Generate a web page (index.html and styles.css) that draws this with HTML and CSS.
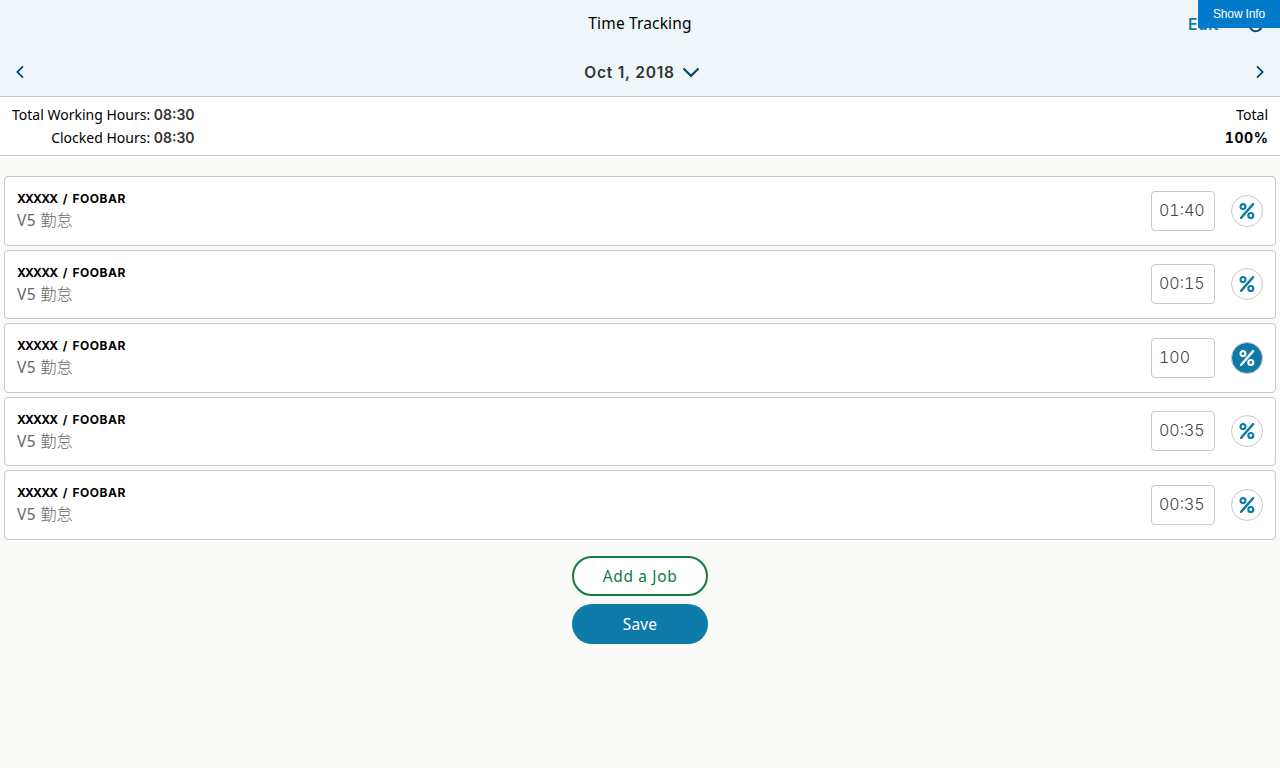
FILE: index.html
```html
<!DOCTYPE html>
<html lang="en">
<head>
<meta charset="utf-8">
<title>Time Tracking</title>
<link rel="stylesheet" href="styles.css">
</head>
<body>
<svg width="0" height="0" class="sprite">
  <symbol id="percent" viewBox="0 0 16 16"><g fill="none" stroke="currentColor" stroke-width="2.1"><circle cx="4" cy="3.6" r="2.5"/><circle cx="11.8" cy="12.5" r="2.5"/><path d="M14 1.2 2.2 14.8" stroke-width="2.5" stroke-linecap="round"/></g></symbol>
</svg>
<header class="header">
  <div class="bar">
    <h1 class="title">Time Tracking</h1>
    <div class="actions">
      <a class="edit">Edit</a>
      <svg class="refresh" width="16" height="16" viewBox="0 0 16 16"><path d="M13.8 9.5A6.3 6.3 0 1 1 12.5 3.8L14 5.3M14.3 1v4.5H9.8" fill="none" stroke="#0b4a6f" stroke-width="2"/></svg>
    </div>
  </div>
  <nav class="datebar">
    <svg class="arrow" width="8" height="14" viewBox="0 0 8 14"><path d="M7 1.3 1.3 7 7 12.7"/></svg>
    <div class="date"><span>Oct 1, 2018</span><svg class="chevron" width="18" height="11" viewBox="0 0 18 11"><path d="M1.5 1.5 9 8.8 16.5 1.5"/></svg></div>
    <svg class="arrow" width="8" height="14" viewBox="0 0 8 14"><path d="M1 1.3 6.7 7 1 12.7"/></svg>
  </nav>
</header>
<section class="summary">
  <div class="hours">
    <div class="line">Total Working Hours: <b>08:30</b></div>
    <div class="line">Clocked Hours: <b>08:30</b></div>
  </div>
  <div class="total">
    <div class="line">Total</div>
    <div class="line percent">100%</div>
  </div>
</section>
<main class="jobs">
  <article class="card">
    <div class="job"><div class="code"><span class="client">XXXXX</span> / FOOBAR</div><div class="name">V5 <span class="cjk">勤怠</span></div></div>
    <div class="time">01:40</div><div class="toggle"><svg width="16" height="16"><use href="#percent"/></svg></div>
  </article>
  <article class="card">
    <div class="job"><div class="code"><span class="client">XXXXX</span> / FOOBAR</div><div class="name">V5 <span class="cjk">勤怠</span></div></div>
    <div class="time">00:15</div><div class="toggle"><svg width="16" height="16"><use href="#percent"/></svg></div>
  </article>
  <article class="card">
    <div class="job"><div class="code"><span class="client">XXXXX</span> / FOOBAR</div><div class="name">V5 <span class="cjk">勤怠</span></div></div>
    <div class="time">100</div><div class="toggle on"><svg width="16" height="16"><use href="#percent"/></svg></div>
  </article>
  <article class="card">
    <div class="job"><div class="code"><span class="client">XXXXX</span> / FOOBAR</div><div class="name">V5 <span class="cjk">勤怠</span></div></div>
    <div class="time">00:35</div><div class="toggle"><svg width="16" height="16"><use href="#percent"/></svg></div>
  </article>
  <article class="card">
    <div class="job"><div class="code"><span class="client">XXXXX</span> / FOOBAR</div><div class="name">V5 <span class="cjk">勤怠</span></div></div>
    <div class="time">00:35</div><div class="toggle"><svg width="16" height="16"><use href="#percent"/></svg></div>
  </article>
</main>
<footer class="buttons">
  <div class="btn add">Add a Job</div>
  <div class="btn save">Save</div>
</footer>
<div class="show-info">Show Info</div>
</body>
</html>
```
FILE: styles.css
```css
* { box-sizing: border-box; }
body { margin: 0; min-height: 768px; background: #fafaf9; color: #000; font-family: "Noto Sans", "Noto Sans CJK JP", sans-serif; font-size: 16px; }
.sprite { position: absolute; }
.header { height: 97px; background: #eef6fa; border-bottom: 1px solid #c9c9c9; }
.bar { height: 48px; display: grid; grid-template-columns: 1fr auto 1fr; align-items: center; padding: 0 16px; }
.title { grid-column: 2; margin: 0 0 1px; font-size: 15.5px; letter-spacing: .15px; font-weight: 400; line-height: 21px; }
.actions { display: flex; justify-content: flex-end; align-items: center; gap: 29px; }
.edit { color: #0e7aa8; font: 600 15.5px Inter, sans-serif; letter-spacing: .6px; }
.refresh { margin-top: 2px; }
.datebar { height: 48px; display: flex; justify-content: space-between; align-items: center; padding: 0 16px; }
.arrow, .chevron { fill: none; stroke: #054f74; stroke-width: 1.8; }
.chevron { stroke-width: 2.3; margin-top: 1px; }
.date { display: flex; align-items: center; gap: 7px; color: #333; font: 600 15.5px Inter, sans-serif; letter-spacing: .8px; padding-left: 4px; }
.summary { height: 59px; background: #fff; border-bottom: 1px solid #c9c9c9; display: flex; justify-content: space-between; padding: 7px 12px 0; font-size: 14px; text-align: right; }
.line { height: 23px; line-height: 22px; white-space: nowrap; }
.line b { color: #333; font-family: Inter, sans-serif; font-weight: 600; font-size: 14px; }
.percent { font-family: Inter, sans-serif; font-weight: 700; font-size: 14px; font-variant-numeric: tabular-nums; letter-spacing: .6px; margin-right: -.6px; }
.jobs { padding: 20px 4px 0; display: flex; flex-direction: column; gap: 4px; }
.card { height: 69.5px; background: #fff; border: 1px solid #c9c9c9; border-radius: 4px; display: flex; align-items: center; padding: 0 12px; }
.job { flex: 1; padding-bottom: 2px; }
.code { font: 700 12px/21px Inter, sans-serif; letter-spacing: .5px; word-spacing: 1.3px; }
.client { letter-spacing: -.8px; margin-right: .8px; }
.name { font-size: 15.5px; line-height: 22px; color: #666; white-space: nowrap; letter-spacing: .4px; }
.cjk { font-family: "Noto Sans CJK JP", sans-serif; font-size: 16px; font-weight: 300; line-height: 20px; letter-spacing: 0; }
.time { width: 64px; height: 40px; border: 1px solid #c9c9c9; border-radius: 4px; padding: 0 7px; font: 300 16px/37px Inter, sans-serif; font-variant-numeric: tabular-nums; color: #444; margin-right: 16px; }
.toggle { width: 32px; height: 32px; border: 1px solid #c9c9c9; border-radius: 50%; color: #0e7aa8; display: grid; place-items: center; }
.toggle.on { background: #0e7aa8; color: #fff; }
.buttons { display: flex; flex-direction: column; align-items: center; gap: 8px; padding-top: 16px; }
.btn { width: 136px; height: 40px; border-radius: 20px; display: grid; place-items: center; font-size: 15.5px; letter-spacing: .2px; }
.add { background: #fff; border: 2px solid #147a3d; color: #147a3d; letter-spacing: .65px; }
.save { background: #0e7aa8; color: #fff; }
.show-info { position: absolute; top: 0; right: 0; width: 82px; height: 28px; background: #007acb; color: #fff; font: 12px/28px "Liberation Sans", sans-serif; letter-spacing: -.15px; text-align: center; }
```
